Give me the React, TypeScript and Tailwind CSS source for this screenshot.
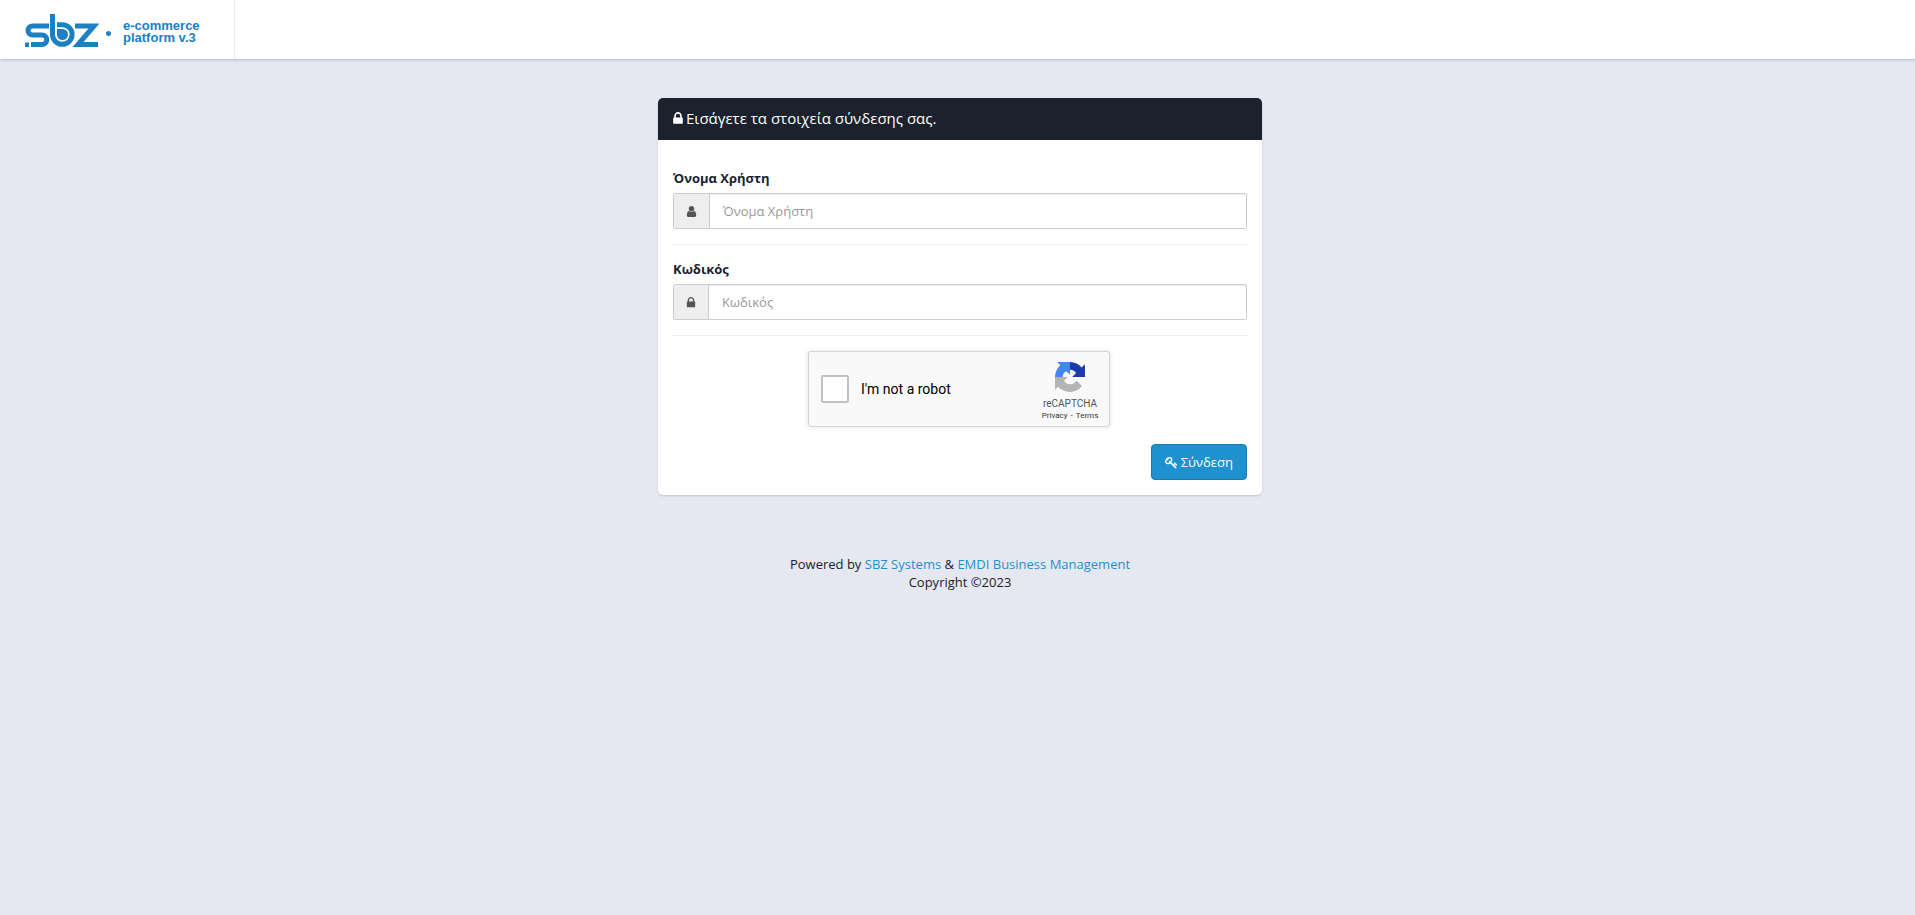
import type { ReactNode } from 'react';

type GlyphProps = {
  d: string;
  viewBox: string;
  className: string;
};

function Glyph({ d, viewBox, className }: GlyphProps) {
  return (
    <svg viewBox={viewBox} className={className} fill="currentColor" aria-hidden="true">
      <path d={d} />
    </svg>
  );
}

const lockPath =
  'M320 768h512v-192q0-106-75-181t-181-75-181 75-75 181v192zm832 96v576q0 40-28 68t-68 28h-960q-40 0-68-28t-28-68v-576q0-40 28-68t68-28h32v-192q0-184 132-316t316-132 316 132 132 316v192h32q40 0 68 28t28 68z';
const userPath =
  'M1536 1399q0 109-62.5 187t-150.5 78h-854q-88 0-150.5-78t-62.5-187q0-85 8.5-160.5t31.5-152 58.5-131 94-89 134.5-34.5q131 128 313 128t313-128q76 0 134.5 34.5t94 89 58.5 131 31.5 152 8.5 160.5zm-256-887q0 159-112.5 271.5t-271.5 112.5-271.5-112.5-112.5-271.5 112.5-271.5 271.5-112.5 271.5 112.5 112.5 271.5z';
const keyPath =
  'M832 512q0-80-56-136t-136-56-136 56-56 136q0 42 19 83-41-19-83-19-80 0-136 56t-56 136 56 136 136 56 136-56 56-136q0-42-19-83 41 19 83 19 80 0 136-56t56-136zm851 704q0 17-49 66t-66 49q-9 0-28.5-16t-36.5-33-38.5-40-24.5-26l-96 96 220 220q28 28 28 68 0 42-39 81t-81 39q-40 0-68-28l-671-671q-176 131-365 131-163 0-265.5-102.5t-102.5-265.5q0-160 95-313t248-248 313-95q163 0 265.5 102.5t102.5 265.5q0 189-131 365l355 355 96-96q-3-3-26-24.5t-40-38.5-33-36.5-16-28.5q0-17 49-66t66-49q13 0 23 10 6 6 46 44.5t82 79.5 86.5 86 73 78 28.5 41z';

function Logo() {
  return (
    <svg viewBox="0 0 87 34" className="h-[34px] w-[87px]" fill="none" aria-label="sbz">
      <g stroke="#1c80c3" strokeWidth="5">
        <path d="M24 12H7.500a4.500 4.500 0 0 0 0 9H17a4.700 4.700 0 0 1 0 9.500H6" />
        <path d="M27.500 0V20.500a9.800 9.800 0 1 0 9.800-9.800H32" />
        <path d="M50 12H69L53 30.500H73" strokeLinejoin="miter" />
      </g>
      <path d="M32 15h5.500a5.500 5.500 0 1 1-5.500 5.500z" fill="#1c80c3" />
      <path d="M0 28.500h4v4.500H0z" fill="#1c80c3" />
      <circle cx="83.500" cy="19.500" r="2.500" fill="#1c80c3" />
    </svg>
  );
}

function Header() {
  return (
    <header className="flex h-[59px] bg-white shadow-[0_1px_3px_rgba(0,0,0,0.2)]">
      <a href="#" className="flex w-[235px] items-center border-r border-[#eaeaea] pt-[2px] pl-[25px]">
        <Logo />
        <span className="flex flex-col pt-[3px] pl-[11px] font-['Liberation_Sans',Arial,sans-serif] text-[13px] leading-[12px] font-bold text-[#1c80c3]">
          <span>e-commerce</span>
          <span>platform v.3</span>
        </span>
      </a>
    </header>
  );
}

type FieldProps = {
  id: string;
  label: string;
  type: string;
  icon: ReactNode;
};

function Field({ id, label, type, icon }: FieldProps) {
  return (
    <div className="border-b border-[#eeeeee] pb-[15px]">
      <label htmlFor={id} className="mb-[6px] block font-bold">
        {label}
      </label>
      <div className="flex h-9 rounded-xs border border-[#cccccc]">
        <span className="flex items-center border-r border-[#cccccc] bg-[#eeeeee] px-3 text-[#555555]">
          {icon}
        </span>
        <input
          id={id}
          type={type}
          placeholder={label}
          className="min-w-0 flex-1 bg-white px-[13px] shadow-[inset_0_1px_1px_rgba(0,0,0,0.075)] outline-none placeholder:text-[#999999]"
        />
      </div>
    </div>
  );
}

function Captcha() {
  return (
    <div className="mx-auto h-[78px] w-[304px] font-[Roboto,sans-serif] text-black">
      <div className="flex h-[76px] w-[302px] items-center rounded-[3px] border border-[#d3d3d3] bg-[#f9f9f9] pl-3 shadow-[0_0_4px_1px_rgba(0,0,0,0.08)]">
        <input
          id="robot"
          type="checkbox"
          className="size-7 appearance-none rounded-[2px] border-2 border-[#c1c1c1] bg-white"
        />
        <label htmlFor="robot" className="flex-1 pl-3 text-sm">
          I'm not a robot
        </label>
        <div className="flex w-[78px] flex-col items-center pt-[6px] text-[#555555]">
          <svg viewBox="0 0 64 64" className="size-[30px]" aria-hidden="true">
            <path
              fill="#1c3aa9"
              d="M64 31.955l-.033-1.370V4.687l-7.160 7.160C50.948 4.674 42.033.093 32.050.093c-10.400 0-19.622 4.960-25.458 12.640l11.736 11.860a15.550 15.550 0 0 1 4.754-5.334c2.050-1.600 4.952-2.906 8.968-2.906.485 0 .860.057 1.135.163 4.976.393 9.288 3.140 11.828 7.124l-8.307 8.307L64 31.953"
            />
            <path
              fill="#4285f4"
              d="M31.862.094l-1.370.033H4.594l7.160 7.160C4.580 13.147 0 22.060 0 32.046c0 10.400 4.960 19.622 12.640 25.458L24.500 45.768a15.550 15.550 0 0 1-5.334-4.754c-1.600-2.050-2.906-4.952-2.906-8.968 0-.485.057-.860.163-1.135.393-4.976 3.140-9.288 7.124-11.828l8.307 8.307L31.860.095"
            />
            <path
              fill="#b4b4b4"
              d="M.001 32.045l.033 1.370v25.898l7.160-7.160c5.860 7.173 14.774 11.754 24.760 11.754 10.400 0 19.622-4.960 25.458-12.640l-11.736-11.860a15.550 15.550 0 0 1-4.754 5.334c-2.050 1.600-4.952 2.906-8.968 2.906-.485 0-.860-.057-1.135-.163-4.976-.393-9.288-3.140-11.828-7.124l8.307-8.307c-10.522.040-22.400.066-27.295-.005"
            />
          </svg>
          <span className="mt-[6px] text-[10px] leading-[12px]">reCAPTCHA</span>
          <span className="flex gap-[3px] text-[8px] leading-[12px] text-[#333333]">
            <a href="#">Privacy</a>
            <span>-</span>
            <a href="#">Terms</a>
          </span>
        </div>
      </div>
    </div>
  );
}

export default function App() {
  return (
    <div className="min-h-screen bg-[#e5e8f0] font-['Open_Sans','Noto_Sans',sans-serif] text-[13px] leading-[18px] text-[#1b212d]">
      <Header />
      <main className="pt-[39px] pl-[5px]">
        <form className="mx-auto max-w-[604px] rounded-[5px] bg-white shadow-[0_1px_2px_rgba(0,0,0,0.15)]">
          <h1 className="flex h-[42px] items-center gap-[3px] rounded-t-[5px] bg-[#1b212d] px-[15px] pb-[2px] text-[15px] text-white">
            <Glyph d={lockPath} viewBox="0 0 1152 1792" className="h-[15px] w-[10px]" />
            Εισάγετε τα στοιχεία σύνδεσης σας.
          </h1>
          <div className="flex flex-col gap-[15px] px-[15px] pt-[29px] pb-[15px]">
            <Field
              id="username"
              label="Όνομα Χρήστη"
              type="text"
              icon={<Glyph d={userPath} viewBox="256 0 1280 1792" className="h-[13px] w-[11px]" />}
            />
            <Field
              id="password"
              label="Κωδικός"
              type="password"
              icon={<Glyph d={lockPath} viewBox="0 0 1152 1792" className="h-[13px] w-[10px]" />}
            />
            <Captcha />
            <button
              type="submit"
              className="flex h-9 items-center gap-[3px] self-end rounded-[4px] border border-[#1a7bb3] bg-[#1e91cf] px-[13px] text-white"
            >
              <Glyph d={keyPath} viewBox="0 0 1792 1792" className="size-[13px]" />
              Σύνδεση
            </button>
          </div>
        </form>
        <footer className="pt-[60px] text-center">
          Powered by{' '}
          <a href="#" className="text-[#1e91cf]">
            SBZ Systems
          </a>{' '}
          &amp;{' '}
          <a href="#" className="text-[#1e91cf]">
            EMDI Business Management
          </a>
          <br />
          Copyright ©2023
        </footer>
      </main>
    </div>
  );
}
